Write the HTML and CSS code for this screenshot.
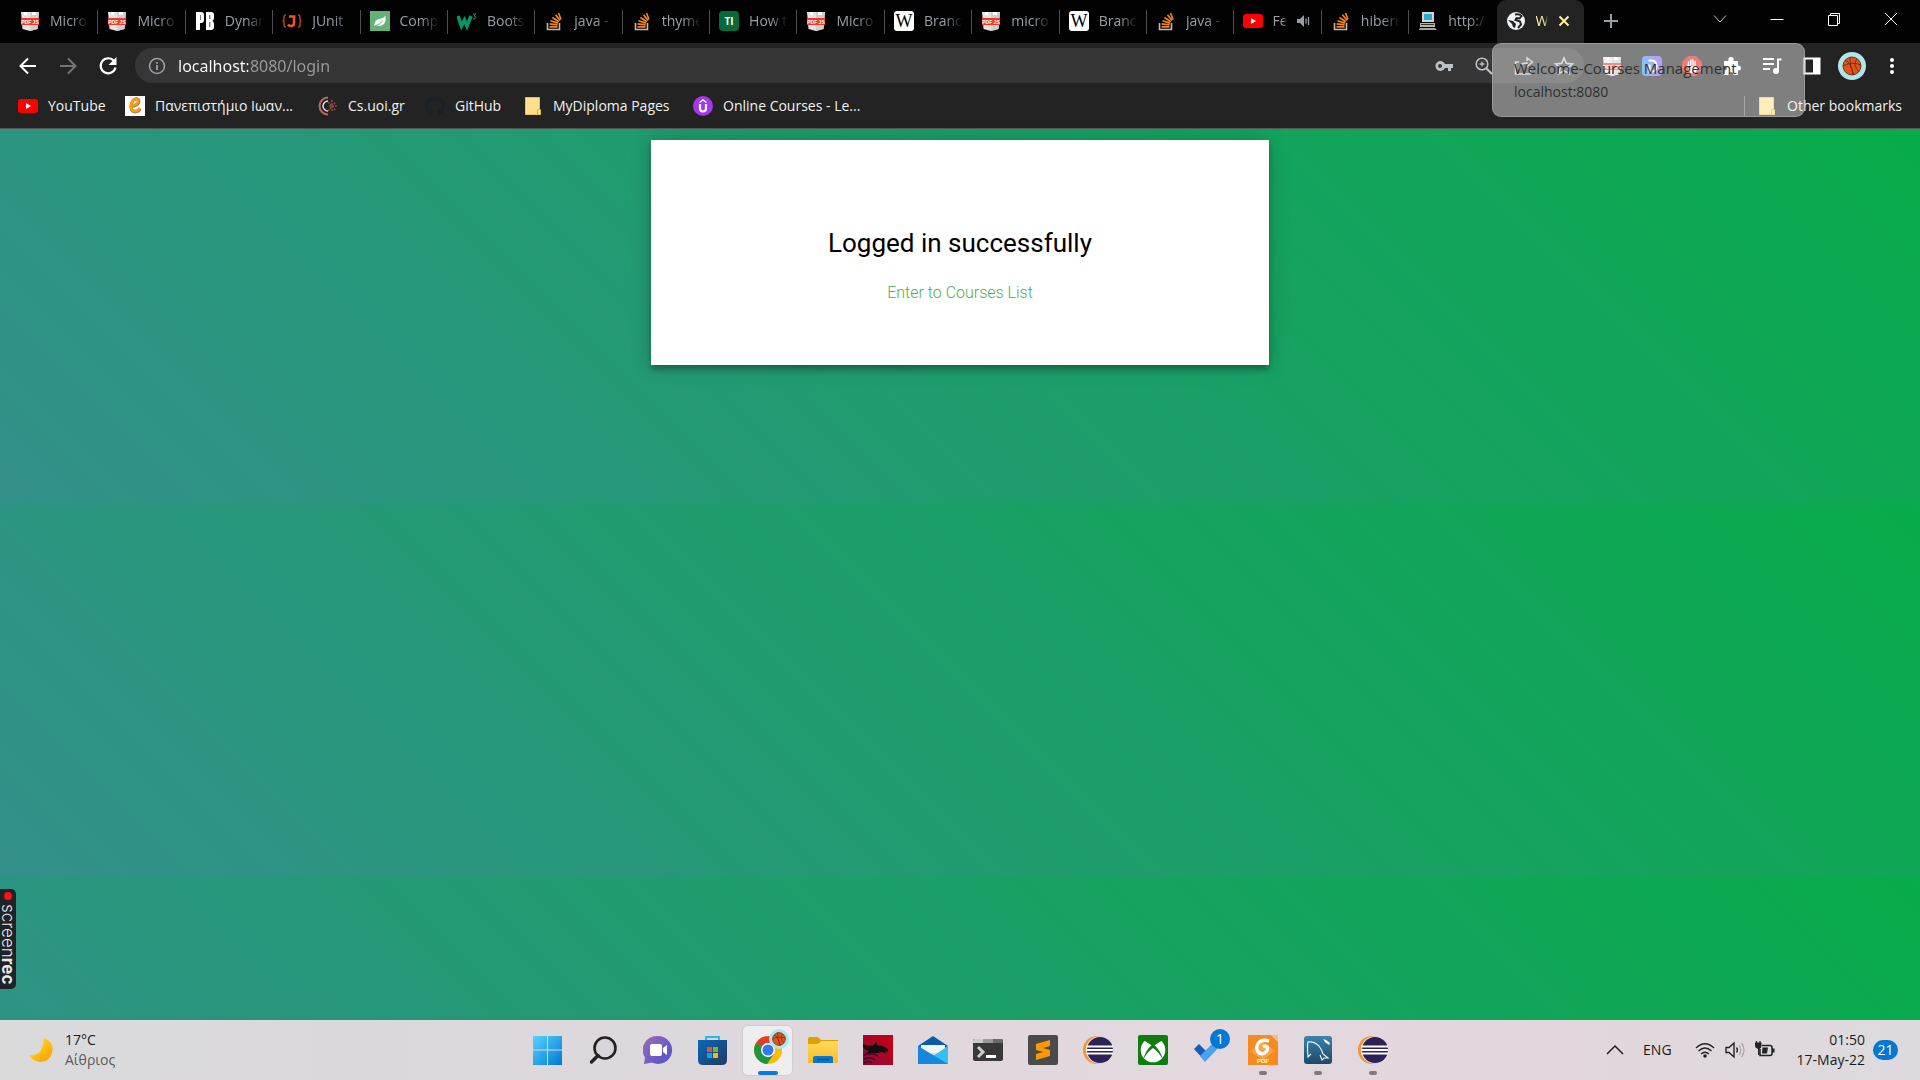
FILE: index.html
```html
<!DOCTYPE html>
<html lang="en">
<head>
<meta charset="utf-8">
<title>Welcome-Courses Management</title>
<link rel="stylesheet" href="styles.css">
</head>
<body>
<svg class="gradients" aria-hidden="true">
  <defs>
    <linearGradient id="g-win" x1="0" y1="0" x2="1" y2="1"><stop offset="0" stop-color="#5ad2ff"/><stop offset="1" stop-color="#0078d4"/></linearGradient>
    <linearGradient id="g-chat" x1="0" y1="0" x2="1" y2="1"><stop offset="0" stop-color="#9a6cb4"/><stop offset="1" stop-color="#4f52d0"/></linearGradient>
    <linearGradient id="g-store" x1="0" y1="0" x2="1" y2="1"><stop offset="0" stop-color="#0669bd"/><stop offset="1" stop-color="#243a5e"/></linearGradient>
    <linearGradient id="g-folder" x1="0" y1="0" x2="0" y2="1"><stop offset="0" stop-color="#ffd95c"/><stop offset="1" stop-color="#fcbd25"/></linearGradient>
    <linearGradient id="g-kali" x1="0" y1="1" x2="1" y2="0"><stop offset="0" stop-color="#8c0a3a"/><stop offset="1" stop-color="#c80012"/></linearGradient>
    <linearGradient id="g-moon" x1="0" y1="0" x2="1" y2="1"><stop offset="0" stop-color="#fff000"/><stop offset="1" stop-color="#ff9416"/></linearGradient>
    <linearGradient id="g-sql" x1="0" y1="0" x2="0" y2="1"><stop offset="0" stop-color="#3b84ab"/><stop offset="1" stop-color="#1d4866"/></linearGradient>
    <linearGradient id="g-d" x1="0" y1="0" x2="1" y2="0"><stop offset="0" stop-color="#2f9bf5"/><stop offset="1" stop-color="#8c50ec"/></linearGradient>
  </defs>
</svg>
<svg class="symbols" aria-hidden="true">
  <symbol id="i-pdf" viewBox="0 0 20 20"><path d="M1 1h18l-1.500 17L10 20l-7.500-2z" fill="#e4e4e4"/><path d="M10 1h9l-1.500 17L10 20z" fill="#cfcfcf"/><path d="M4 1v3h3V1zM12 1v3h4V1z" fill="#fff"/><path d="M1 7h18v7H1z" fill="#ee3a24"/><text x="10" y="12.500" text-anchor="middle" font-family="Liberation Sans, sans-serif" font-size="5" font-weight="700" fill="#fff">PDF JS</text></symbol>
  <symbol id="i-pb" viewBox="0 0 20 20"><path fill="#fff" fill-rule="evenodd" d="M1 1h5q3 0 3 3v5q0 3-3 3H5v7H1zM5 4v5h.5V4zM11 1h5q3 0 3 3v3q0 2-1.500 3Q19 11 19 13v3q0 3-3 3h-5zM14.500 4v4h.7V4zM14.500 11v5h.7v-5z"/></symbol>
  <symbol id="i-junit" viewBox="0 0 20 20"><g fill="none" stroke="#b8401c" stroke-width="1.500"><path d="M4 4Q2 4 2 6v2q0 2-1.500 2Q2 10 2 12v2q0 2 2 2M16 4q2 0 2 2v2q0 2 1.500 2Q18 10 18 12v2q0 2-2 2"/></g><path d="M7 5.500h6.500M12 5v7q0 3-3 3-2 0-3-1.500" fill="none" stroke="#e8542c" stroke-width="2.600"/></symbol>
  <symbol id="i-leaf" viewBox="0 0 20 20"><path d="M0 0h20v20H0z" fill="#62b176"/><path d="M15.500 4.500Q17 15 9 15q-2 0-3-1l-1.500 1.500Q4 9 9 8q5-1 6.500-3.500z" fill="#fff"/><path d="M5 15q5-1.500 8-5.500" stroke="#62b176" fill="none"/></symbol>
  <symbol id="i-w3" viewBox="0 0 20 20"><path d="M1 5l3.500 10 3-6 2.500 6 4-10" fill="none" stroke="#059862" stroke-width="3.600"/><path d="M16 3h3l-2 2q2 0 2 1.500T16 8" fill="none" stroke="#059862" stroke-width="1"/></symbol>
  <symbol id="i-so" viewBox="0 0 20 20"><path d="M3.500 12v6.500h12V12" fill="none" stroke="#bcbbbb" stroke-width="1.600"/><g stroke="#f48024" stroke-width="1.700"><path d="M5.500 15.800h8M5.600 12.900l8 1M6.500 9.700l7.500 2.400M8.400 6.500l6.400 4.300M11.500 3.700l4.500 5.900M14.500 2l2.500 6.500"/></g></symbol>
  <symbol id="i-ti" viewBox="0 0 20 20"><rect width="20" height="20" rx="4" fill="#066a39"/><text x="10" y="14" text-anchor="middle" font-size="10" font-weight="700" fill="#fff">TI</text></symbol>
  <symbol id="i-wiki" viewBox="0 0 20 20"><rect width="20" height="20" rx="3" fill="#fff"/><text x="10" y="16" text-anchor="middle" font-size="18" font-family="Liberation Serif, serif" fill="#000">W</text></symbol>
  <symbol id="i-yt" viewBox="0 0 20 20"><rect y="3" width="20" height="14" rx="3" fill="#f00"/><path d="M8 7l5 3-5 3z" fill="#fff"/></symbol>
  <symbol id="i-pc" viewBox="0 0 20 20"><path d="M4 1h12v10H4z" fill="#d6d4c8"/><path d="M6 3h8v6H6z" fill="#28a9d8"/><path d="M2 12h15v4H2z" fill="#b8b6aa"/><path d="M3 13.500h13" stroke="#333"/><path d="M2 17h15l2 2H1z" fill="#a5a39a"/></symbol>
  <symbol id="i-globe" viewBox="0 0 20 20"><circle cx="10" cy="10" r="9" fill="#f1f3f4"/><path d="M9 3.500q4-1 6.500 1.500l-2 2.500-3-.5-1 2 4.500 1.500 1 3-3 3.500" fill="none" stroke="#222" stroke-width="2"/><path d="M2 9l5 1 3 3-1 4-2-1-1-3z" fill="#222"/></symbol>
  <symbol id="i-ball" viewBox="0 0 28 28"><circle cx="14" cy="14" r="14" fill="#aee6ec"/><circle cx="14" cy="14" r="9" fill="#e2521b"/><g fill="none" stroke="#6b2c12" stroke-width=".9"><circle cx="14" cy="14" r="9"/><path d="M5 14q9-5 18-1M12 5q-1 9 4 18M7 8q7 3 8 15M19 7q-5 5 2 13"/></g></symbol>
  <symbol id="i-note" viewBox="0 0 20 20"><path d="M2.500 1.500h14V13l1 1v4.500h-15z" fill="#ffe08a" stroke="#e8bf50"/><path d="M14.500 18v-4l2-1" fill="none" stroke="#d8ab35"/></symbol>
  <symbol id="i-eclipse" viewBox="0 0 30 30"><circle cx="14" cy="15" r="14" fill="#f7942a"/><circle cx="16.500" cy="15" r="13.800" fill="#e1d9de"/><circle cx="17" cy="15" r="13" fill="#2c2255"/><path d="M3.500 10.500h27v2h-27zM3 14h27.500v2H3zM3.500 17.500h27v2h-27z" fill="#fff"/></symbol>
</svg>

<header class="browser">
  <nav class="tabstrip" aria-label="Tabs">
    <div class="tabs">
      <div class="tab"><svg class="fav"><use href="#i-pdf"/></svg><span class="title">Micro</span></div>
      <div class="tab"><svg class="fav"><use href="#i-pdf"/></svg><span class="title">Micro</span></div>
      <div class="tab"><svg class="fav"><use href="#i-pb"/></svg><span class="title">Dynar</span></div>
      <div class="tab"><svg class="fav"><use href="#i-junit"/></svg><span class="title">JUnit</span></div>
      <div class="tab"><svg class="fav"><use href="#i-leaf"/></svg><span class="title">Comp</span></div>
      <div class="tab"><svg class="fav"><use href="#i-w3"/></svg><span class="title">Boots</span></div>
      <div class="tab"><svg class="fav"><use href="#i-so"/></svg><span class="title">java -</span></div>
      <div class="tab"><svg class="fav"><use href="#i-so"/></svg><span class="title">thyme</span></div>
      <div class="tab"><svg class="fav"><use href="#i-ti"/></svg><span class="title">How t</span></div>
      <div class="tab"><svg class="fav"><use href="#i-pdf"/></svg><span class="title">Micro</span></div>
      <div class="tab"><svg class="fav"><use href="#i-wiki"/></svg><span class="title">Branc</span></div>
      <div class="tab"><svg class="fav"><use href="#i-pdf"/></svg><span class="title">micro</span></div>
      <div class="tab"><svg class="fav"><use href="#i-wiki"/></svg><span class="title">Branc</span></div>
      <div class="tab"><svg class="fav"><use href="#i-so"/></svg><span class="title">java -</span></div>
      <div class="tab playing"><svg class="fav"><use href="#i-yt"/></svg><span class="title">Fe</span><svg class="sound" viewBox="0 0 14 14"><path d="M1 5h3l4-4v12L4 9H1z" fill="#9aa0a6"/><path d="M10 4.500v5M12.500 3v8" stroke="#9aa0a6" stroke-width="1.300"/></svg></div>
      <div class="tab"><svg class="fav"><use href="#i-so"/></svg><span class="title">hibern</span></div>
      <div class="tab last"><svg class="fav"><use href="#i-pc"/></svg><span class="title">http:/</span></div>
      <div class="tab active"><svg class="fav"><use href="#i-globe"/></svg><span class="title">W</span><button class="plain" aria-label="Close tab"><svg class="s12" viewBox="0 0 12 12"><path d="M1.500 1.500l9 9M10.500 1.500l-9 9" stroke="#ffef9c" stroke-width="2"/></svg></button></div>
    </div>
    <div class="window-area">
      <button class="plain newtab" aria-label="New tab"><svg class="s16" viewBox="0 0 16 16"><path d="M8 1v14M1 8h14" stroke="#9aa0a6" stroke-width="2"/></svg></button>
      <div class="window-buttons">
        <button class="plain" aria-label="Search tabs"><svg class="s16" viewBox="0 0 16 16"><path d="M2 4.500l6 6.500 6-6.500" fill="none" stroke="#ccc"/></svg></button>
        <button class="plain" aria-label="Minimize"><svg class="s16" viewBox="0 0 16 16"><path d="M1.500 8.500h13" stroke="#fff"/></svg></button>
        <button class="plain" aria-label="Restore"><svg class="s16" viewBox="0 0 16 16"><path d="M2.500 4.500h9v10h-9zM4.500 4.500v-2h9v10h-2" fill="none" stroke="#fff"/></svg></button>
        <button class="plain" aria-label="Close"><svg class="s16" viewBox="0 0 16 16"><path d="M2 2l12 12M14 2L2 14" stroke="#fff"/></svg></button>
      </div>
    </div>
  </nav>

  <div class="toolbar">
    <div class="nav-buttons">
      <button class="plain" aria-label="Back"><svg class="s20" viewBox="0 0 20 20"><path d="M18 10H3M10 2.500L2.500 10l7.500 7.500" fill="none" stroke="#fff" stroke-width="2"/></svg></button>
      <button class="plain" aria-label="Forward"><svg class="s20" viewBox="0 0 20 20"><path d="M2 10h15M10 2.500l7.500 7.500-7.500 7.500" fill="none" stroke="#757575" stroke-width="2"/></svg></button>
      <button class="plain" aria-label="Reload"><svg class="s20" viewBox="0 0 20 20"><path d="M16 5a7.500 7.500 0 1 0 1.500 6.500" fill="none" stroke="#fff" stroke-width="2.200"/><path d="M18.500 1v8h-8z" fill="#fff"/></svg></button>
    </div>
    <div class="omnibox">
      <svg class="s20" viewBox="0 0 20 20"><circle cx="10" cy="10" r="7.500" fill="none" stroke="#9aa0a6" stroke-width="1.600"/><path d="M10 9v5M10 6v1.800" stroke="#9aa0a6" stroke-width="1.800"/></svg>
      <input class="url" type="text" aria-label="Address" value="localhost:8080/login">
      <div class="omni-actions">
        <button class="plain" aria-label="Saved passwords"><svg class="s20" viewBox="0 0 20 20"><path fill="#bdc1c6" fill-rule="evenodd" d="M11 8a5 5 0 1 0 0 4h3v3h3v-3h2V8zM6 8a2 2 0 1 1 0 4 2 2 0 0 1 0-4z"/></svg></button>
        <button class="plain" aria-label="Zoom"><svg class="s20" viewBox="0 0 20 20"><circle cx="8" cy="8" r="5.800" fill="none" stroke="#bdc1c6" stroke-width="1.600"/><path d="M12.500 12.500L18 18" stroke="#bdc1c6" stroke-width="2.200"/><path d="M8 5.500v5M5.500 8h5" stroke="#bdc1c6" stroke-width="1.300"/></svg></button>
        <button class="plain" aria-label="Share"><svg class="s20" viewBox="0 0 20 20"><path d="M5 6H1.500v12h15v-5M5 13q1-6 8-6v3.500L18.500 6 13 2v3" fill="none" stroke="#bdc1c6" stroke-width="1.500"/></svg></button>
        <button class="plain" aria-label="Bookmark this tab"><svg class="s20" viewBox="0 0 20 20"><path d="M10 2l2.400 5.400 5.900.6-4.400 3.900 1.300 5.800-5.200-3-5.200 3 1.300-5.800L1.700 8l5.900-.6z" fill="none" stroke="#bdc1c6" stroke-width="1.600"/></svg></button>
      </div>
    </div>
    <div class="extensions">
      <button class="plain" aria-label="PDF viewer"><svg class="s20"><use href="#i-pdf"/></svg></button>
      <button class="plain" aria-label="D extension"><svg class="s20" viewBox="0 0 20 20"><rect width="20" height="20" rx="4" fill="url(#g-d)"/><path d="M6.500 4.500h3q5 0 5 5.500t-5 5.500h-2v-7" fill="none" stroke="#fff" stroke-width="2"/></svg></button>
      <button class="plain" aria-label="Ad blocker"><svg class="s20" viewBox="0 0 20 20"><path d="M6 0h8l6 6v8l-6 6H6l-6-6V6z" fill="#e0201c"/><path d="M6.500 10V6M8.800 9V4M11 9V4M13.200 10V5.500M6 9l1 5 2 2.500h3.500l3.500-5" stroke="#fff" stroke-width="1.400" fill="#fff" stroke-linecap="round"/></svg></button>
      <button class="plain" aria-label="Extensions"><svg class="s20" viewBox="0 0 20 20"><path d="M2 5h4.500q-1-4 2.500-4t2.500 4H16v4.500q3 0 3 2.500t-3 2.500V19h-4.500q0-3-2.500-3t-2.500 3H2v-4.500q3 0 3-2.500t-3-2.500z" fill="#fff"/></svg></button>
      <button class="plain" aria-label="Media controls"><svg class="s20" viewBox="0 0 20 20"><path d="M1 3h11M1 8h11M1 13h7" stroke="#fff" stroke-width="2"/><path d="M19.500 3.500H16V15" fill="none" stroke="#fff" stroke-width="2"/><circle cx="14" cy="15" r="3" fill="#fff"/></svg></button>
      <button class="plain" aria-label="Side panel"><svg class="s20" viewBox="0 0 20 20"><path d="M2.500 2.500h15v15h-15z" fill="none" stroke="#fff" stroke-width="2"/><path d="M11 2h7v16h-7z" fill="#fff"/></svg></button>
      <button class="plain" aria-label="Profile"><svg class="s28"><use href="#i-ball"/></svg></button>
      <button class="plain" aria-label="Menu"><svg class="s20" viewBox="0 0 20 20"><circle cx="10" cy="4" r="2" fill="#fff"/><circle cx="10" cy="10" r="2" fill="#fff"/><circle cx="10" cy="16" r="2" fill="#fff"/></svg></button>
    </div>
  </div>

  <nav class="bookmarks" aria-label="Bookmarks">
    <div class="bookmark-list">
      <a href="#"><svg class="s20"><use href="#i-yt"/></svg>YouTube</a>
      <a href="#"><svg class="s20" viewBox="0 0 20 20"><path d="M0 0h20v20H0z" fill="#fff"/><path d="M5 11q9-1 9-5.500 0-3-3-2.500-5 2-5 8 0 5 4 5 3 0 5.500-3" fill="none" stroke="#888" stroke-width="2.800"/><path d="M4.500 10q8.500-1 8.500-5 0-3-2.500-2.500-4.500 2-4.500 7.500 0 5 4 5 3 0 5-3" fill="none" stroke="#f99b0c" stroke-width="2.800"/></svg>Πανεπιστήμιο Ιωαν...</a>
      <a href="#"><svg class="s20" viewBox="0 0 20 20"><g fill="none"><path d="M10 1.500a8.500 8.500 0 0 0 0 17" stroke="#b86a60" stroke-width="2"/><path d="M10 5a5 5 0 0 0 0 10" stroke="#ddd" stroke-width="1.500"/><path d="M10 6l8 9M10 15l8-9M11 10h8M14 4v12" stroke="#8d453f" stroke-width="1.700" stroke-dasharray="2 1"/></g></svg>Cs.uoi.gr</a>
      <a href="#"><svg class="s20" viewBox="0 0 16 16"><path fill="#1b1f27" d="M8 0C3.580 0 0 3.580 0 8c0 3.540 2.290 6.530 5.470 7.590.4.070.55-.17.55-.38 0-.19-.01-.82-.01-1.490-2.010.37-2.530-.49-2.690-.94-.09-.23-.48-.94-.82-1.130-.28-.15-.68-.52-.01-.53.63-.01 1.080.58 1.230.82.720 1.210 1.870.87 2.330.66.070-.52.280-.87.510-1.070-1.780-.2-3.640-.89-3.640-3.950 0-.87.310-1.590.82-2.150-.08-.2-.36-1.020.08-2.120 0 0 .67-.21 2.200.82.640-.18 1.320-.27 2-.27s1.360.09 2 .27c1.530-1.040 2.200-.82 2.200-.82.440 1.100.16 1.920.08 2.120.51.560.82 1.270.82 2.150 0 3.070-1.870 3.750-3.650 3.950.29.25.54.730.54 1.480 0 1.070-.01 1.930-.01 2.200 0 .21.150.46.55.38A8.010 8.010 0 0 0 16 8c0-4.420-3.580-8-8-8z"/></svg>GitHub</a>
      <a href="#"><svg class="s20"><use href="#i-note"/></svg>MyDiploma Pages</a>
      <a href="#"><svg class="s20" viewBox="0 0 20 20"><circle cx="10" cy="10" r="10" fill="#a435f0"/><path d="M7 8v4.500q0 3 3 3t3-3V8" fill="none" stroke="#fff" stroke-width="2.200"/><path d="M6.500 6.500L10 4l3.500 2.500" fill="none" stroke="#fff" stroke-width="1.500"/></svg>Online Courses - Le...</a>
    </div>
    <a class="other" href="#"><svg class="s20"><use href="#i-note"/></svg>Other bookmarks</a>
  </nav>

  <div class="tab-tip" role="tooltip">
    <span class="tip-title">Welcome-Courses Management</span>
    <span>localhost:8080</span>
  </div>
</header>

<main class="page">
  <section class="card">
    <h1>Logged in successfully</h1>
    <a href="#">Enter to Courses List</a>
  </section>
  <div class="recorder"><span class="dot"></span><span>screen<b>rec</b></span></div>
</main>

<footer class="taskbar">
  <div class="weather">
    <svg class="moon" viewBox="0 0 24 24"><path d="M15 0q10 4 8.500 13Q21 24 12 24 4 24 0 17q14 2 15-17z" fill="url(#g-moon)"/></svg>
    <div><div>17°C</div><div class="muted">Αίθριος</div></div>
  </div>
  <div class="apps">
    <button class="app" aria-label="Start"><svg viewBox="0 0 30 30"><path d="M0 1h14v13.500H0zM15 1h14v13.500H15zM0 15.500h14V30H0zM15 15.500h14V30H15z" fill="url(#g-win)"/></svg></button>
    <button class="app" aria-label="Search"><svg viewBox="0 0 30 30"><circle cx="17" cy="13" r="10.500" fill="#d9d4d9" stroke="#222" stroke-width="2.600"/><path d="M10 20.500L3.500 27" stroke="#222" stroke-width="3.400" stroke-linecap="round"/></svg></button>
    <button class="app" aria-label="Chat"><svg viewBox="0 0 30 30"><path d="M15 1a14 14 0 1 1-6 26.600L1 29l1-6.500A14 14 0 0 1 15 1z" fill="url(#g-chat)"/><rect x="7" y="9" width="12" height="12" rx="2" fill="#fff"/><path d="M20 13l4-3v10l-4-3z" fill="#fff"/></svg></button>
    <button class="app" aria-label="Microsoft Store"><svg viewBox="0 0 30 30"><path d="M8 6V2h13v4" fill="none" stroke="#29b6f0" stroke-width="2"/><path d="M0 5h29v20q0 5-5 5H5q-5 0-5-5z" fill="url(#g-store)"/><path d="M9 12h5v5H9z" fill="#f25022"/><path d="M15 12h5v5h-5z" fill="#7fba00"/><path d="M9 18h5v5H9z" fill="#00a4ef"/><path d="M15 18h5v5h-5z" fill="#ffb900"/></svg></button>
    <button class="app current" aria-label="Chrome"><svg viewBox="0 0 30 30"><circle cx="15" cy="15" r="14" fill="#fbbc09"/><path d="M15 15L2.900 8A14 14 0 0 1 27 8z" fill="#e33b2e"/><path d="M15 15L2.900 8A14 14 0 0 0 14 29l7-10z" fill="#1f9543"/><circle cx="15" cy="15" r="7" fill="#fff"/><circle cx="15" cy="15" r="5.500" fill="#3478ee"/></svg><svg class="profile"><use href="#i-ball"/></svg></button>
    <button class="app" aria-label="File Explorer"><svg viewBox="0 0 30 30"><path d="M0 4q0-2 2-2h8l3 3h17v5H0z" fill="#dfa000"/><path d="M0 9h10l3-3h17v22H0z" fill="url(#g-folder)"/><path d="M5 28v-5q0-2 2-2h16q2 0 2 2v5z" fill="#0a78d0"/><path d="M9 24.500h12" stroke="#064c90" stroke-width="1.500"/></svg></button>
    <button class="app" aria-label="Kali"><svg viewBox="0 0 30 30"><path d="M0 0h30v30H0z" fill="url(#g-kali)"/><path d="M0 9q5 3 10 1l4-3v3l6 1 5 3v3l-4-1 3 3-5-2-5 1-4 0q-5 0-10 3 2-3 6-5-4-1-6-4z" fill="#180c10"/><path d="M1 20q9-3 14 1M1 24q7-3 11 1M1 28q5-3 8 0" stroke="#40091f" fill="none" stroke-width="1.500"/></svg></button>
    <button class="app" aria-label="Mail"><svg viewBox="0 0 30 30"><path d="M0 11L15 1l15 10-8 6H8z" fill="#0a5ca8"/><path d="M3 10h24v8H3z" fill="#f4f4f4"/><path d="M0 11l15 10L30 11v18H0z" fill="#35c0f4"/><path d="M0 11l30 18H0z" fill="#1688dc"/></svg></button>
    <button class="app" aria-label="Terminal"><svg viewBox="0 0 30 30"><rect y="4" width="30" height="22" rx="2" fill="#383838"/><path d="M0 8V6q0-2 2-2h8v4z" fill="#ccc"/><path d="M10 4h10v4H10z" fill="#999"/><path d="M20 4h8q2 0 2 2v2H20z" fill="#6a6a6a"/><path d="M5 12l5 5-5 5" fill="none" stroke="#ccc" stroke-width="3"/><path d="M13 21.500h10" stroke="#fff" stroke-width="3"/></svg></button>
    <button class="app" aria-label="Sublime Text"><svg viewBox="0 0 30 30"><rect width="30" height="30" rx="2" fill="#4a4a4a"/><path d="M8 9l14-4v6l-7 2 7 2v6L8 25v-6l7-2-7-2z" fill="#ff9800"/></svg></button>
    <button class="app" aria-label="Eclipse"><svg><use href="#i-eclipse"/></svg></button>
    <button class="app" aria-label="Xbox"><svg viewBox="0 0 30 30"><rect width="30" height="30" rx="2" fill="#107c10"/><circle cx="15" cy="15" r="12.300" fill="#fff"/><path d="M5 6q3-1 10 4 7-5 10-4-3-4-10-4T5 6z" fill="#107c10"/><path d="M15 9Q8 14 5 25q4-8 10-12 6 4 10 12Q22 14 15 9z" fill="#107c10"/><path d="M7 5l8 5 8-5" stroke="#107c10" stroke-width="2" fill="none"/></svg></button>
    <button class="app" aria-label="To Do"><svg viewBox="0 0 30 30"><path d="M1 14l5-5 11 11-5 6z" fill="#185abd"/><path d="M7 21L24 4l5 5-17 18z" fill="#46a4f0"/></svg><span class="count">1</span></button>
    <button class="app open" aria-label="Foxit PDF"><svg viewBox="0 0 30 30"><path d="M0 0h23l7 7v23H0z" fill="#f68a1e"/><path d="M23 0h7v7z" fill="#f9b878"/><path d="M15 7l12 9-12 9L2 16z" fill="#fba24b"/><path d="M21 6q-7-2-10.500 2-3 4-1 8 2.500 4 7 2 3.500-2 3-6-2-2-4.500 0" fill="none" stroke="#fff" stroke-width="3.400"/><text x="15" y="28" text-anchor="middle" font-size="6" font-weight="700" fill="#fff">PDF</text></svg></button>
    <button class="app open" aria-label="MySQL Workbench"><svg viewBox="0 0 30 30"><rect x="1" y="1" width="28" height="28" rx="3" fill="url(#g-sql)"/><path d="M8 19l-3 3Q4 10 5 7q6-1 11 4 3 4 4 8l5 4-4 0-2 2-2-5" fill="none" stroke="#e6f1f7" stroke-width="1.200"/><path d="M20 4l3 1 4 3-1 2-4-3z" fill="#fff"/></svg></button>
    <button class="app open" aria-label="Eclipse workspace"><svg><use href="#i-eclipse"/></svg></button>
  </div>
  <div class="tray">
    <button class="plain" aria-label="Hidden icons"><svg class="s20" viewBox="0 0 20 20"><path d="M2 14l8-8 8 8" fill="none" stroke="#222" stroke-width="1.500"/></svg></button>
    <span class="lang">ENG</span>
    <span class="status">
      <svg class="s20" viewBox="0 0 20 20"><g fill="none" stroke="#222" stroke-width="1.400"><path d="M1 8q9-8.500 18 0M3.500 11q6.500-6 13 0M6 14q4-3.500 8 0"/></g><circle cx="10" cy="16" r="1.800" fill="#222"/></svg>
      <svg class="s20" viewBox="0 0 20 20"><path d="M1 7.500h3l5-4.500v14l-5-4.500H1z" fill="none" stroke="#222" stroke-width="1.400"/><path d="M11.500 7.500q2 2.500 0 5" fill="none" stroke="#222" stroke-width="1.300"/><path d="M14 5q3.500 5 0 10M16.500 3q5 7 0 14" fill="none" stroke="#aaa" stroke-width="1.300"/></svg>
      <svg class="s20" viewBox="0 0 20 20"><path d="M7 5.500h8q2 0 2 2v6q0 2-2 2H5V9" fill="none" stroke="#222" stroke-width="1.500"/><path d="M7.500 7.500H13l-1 6H7zM17 8.500h2.500v4H17zM0 2.500h6.500V6q0 2-2 3v6H3V9Q0 8 0 6z" fill="#222"/><path d="M1.500 1v3M5 1v3" stroke="#222" stroke-width="1.200"/></svg>
    </span>
    <div class="clock"><div>01:50</div><div>17-May-22</div></div>
    <span class="notify">21</span>
  </div>
</footer>
</body>
</html>
```
FILE: styles.css
```css
* {
  box-sizing: border-box;
}

body {
  margin: 0;
  min-height: 100vh;
  display: flex;
  flex-direction: column;
  font-family: "Open Sans", "Noto Sans", sans-serif;
  font-size: 14px;
  line-height: 20px;
}

a {
  color: inherit;
  text-decoration: none;
}

svg {
  display: block;
  flex: none;
}

.gradients {
  position: absolute;
  width: 0;
  height: 0;
}

.symbols {
  display: none;
}

.plain {
  display: flex;
  align-items: center;
  justify-content: center;
  padding: 0;
  border: 0;
  background: none;
}

.s12 { width: 12px; height: 12px; }
.s16 { width: 16px; height: 16px; }
.s20 { width: 20px; height: 20px; }
.s28 { width: 28px; height: 28px; }

/* Browser chrome */
.browser {
  position: relative;
  background: #232323;
  color: #f1f1f1;
}

.tabstrip {
  display: flex;
  height: 43px;
  padding-left: 11px;
  background: #020202;
}

.tabs {
  flex: 1;
  display: grid;
  grid-template-columns: repeat(18, minmax(0, 1fr));
}

.tab {
  display: flex;
  align-items: center;
  gap: 10px;
  padding: 0 9px 2px;
  color: #9aa0a6;
  background: linear-gradient(#4d4d4d, #4d4d4d) right 10px / 1px 24px no-repeat;
}

.tab.last {
  background: none;
}

.tab.active {
  gap: 10px;
  color: #fff3a8;
  background: #232323;
  border-radius: 9px 9px 0 0;
}

.fav {
  width: 20px;
  height: 20px;
}

.title {
  flex: 1;
  overflow: hidden;
  white-space: nowrap;
  mask-image: linear-gradient(to left, transparent, #000 18px);
}

.tab.active .title,
.tab.playing .title {
  mask-image: linear-gradient(to left, transparent, #000 4px);
}

.tab.playing {
  gap: 9px;
  padding-right: 12px;
}

.tab.active .plain {
  margin-right: 5px;
}

.sound {
  width: 14px;
  height: 14px;
}

.window-area {
  width: 336px;
  display: flex;
  justify-content: space-between;
}

.newtab {
  width: 54px;
  padding-bottom: 2px;
}

.window-buttons {
  display: grid;
  grid-template-columns: repeat(4, 57px);
  height: 37px;
  padding-right: 1px;
}

.toolbar {
  display: flex;
  align-items: center;
  height: 45px;
  padding: 0 8px;
}

.nav-buttons .plain,
.omni-actions .plain,
.extensions .plain {
  width: 40px;
  height: 35px;
}

.nav-buttons,
.omni-actions,
.extensions {
  display: flex;
}

.omnibox {
  flex: 1;
  display: flex;
  align-items: center;
  gap: 11px;
  height: 35px;
  margin-left: 7px;
  padding-left: 12px;
  border-radius: 18px;
  background: #363636;
}

.url {
  flex: 1;
  min-width: 0;
  padding: 0;
  border: 0;
  font: 16px/24px "Noto Sans", "Open Sans", sans-serif;
  color: transparent;
  background: linear-gradient(to right, #fff 70px, #9c9c9c 70px);
  background-clip: text;
}

.extensions {
  margin-left: 8px;
}

.bookmarks {
  display: flex;
  align-items: center;
  justify-content: space-between;
  height: 41px;
  padding: 0 18px 4px;
  border-bottom: 1px solid #555;
}

.bookmark-list {
  display: grid;
  grid-template-columns: 107px 193px 107px 98px 170px auto;
}

.bookmarks a {
  display: flex;
  align-items: center;
  gap: 10px;
  white-space: nowrap;
}

.bookmarks .other {
  padding-left: 12px;
  border-left: 1px solid #666;
}

.tab-tip {
  position: absolute;
  top: 43px;
  right: 115px;
  width: 313px;
  height: 74px;
  display: flex;
  flex-direction: column;
  gap: 4px;
  padding: 14px 21px;
  border: 1px solid rgba(180, 180, 180, 0.5);
  border-radius: 9px;
  background: rgba(255, 255, 255, 0.42);
  color: #303030;
  white-space: nowrap;
}

.tip-title {
  font-size: 15px;
  font-weight: 500;
}

/* Web page */
.page {
  position: relative;
  flex: 1;
  padding-top: 11px;
  background: linear-gradient(45deg, #328f8a, #08ac4b) 0 0 / 100% 374px;
  font-family: Roboto, sans-serif;
}

.card {
  display: flex;
  flex-direction: column;
  align-items: center;
  gap: 20px;
  width: 618px;
  max-width: 100%;
  margin: 0 auto;
  padding: 85px 56px 60px;
  background: #fff;
  box-shadow: 0 0 20px 0 rgba(0, 0, 0, 0.2), 0 5px 5px 0 rgba(0, 0, 0, 0.24);
}

.card h1 {
  margin: 0;
  font-size: 26px;
  font-weight: 400;
  line-height: 36px;
  color: #000;
}

.card a {
  font-size: 16px;
  font-weight: 300;
  line-height: 24px;
  color: #4caf50;
}

.recorder {
  position: absolute;
  left: 0;
  bottom: 31px;
  width: 16px;
  height: 100px;
  display: flex;
  align-items: center;
  gap: 4px;
  padding-top: 3px;
  border-radius: 0 5px 5px 0;
  background: #1f2229;
  color: #e8e8e8;
  font: 300 17px/16px "Inter", sans-serif;
  writing-mode: vertical-rl;
}

.recorder b {
  font-weight: 700;
}

.dot {
  width: 8px;
  height: 8px;
  border-radius: 50%;
  background: #f11;
}

/* Taskbar */
.taskbar {
  display: grid;
  grid-template-columns: 1fr auto 1fr;
  align-items: center;
  height: 60px;
  background: linear-gradient(to right, #dadadb, #dcd8dc 25%, #e2d8de 60%, #e1d7dc 82%, #dddadd);
  color: #1c1c1c;
}

.weather {
  display: flex;
  align-items: center;
  gap: 12px;
  padding-left: 29px;
}

.moon {
  width: 24px;
  height: 24px;
}

.muted {
  color: #5a5a5a;
}

.apps {
  display: flex;
  gap: 6px;
}

.app {
  position: relative;
  display: flex;
  align-items: center;
  justify-content: center;
  width: 49px;
  height: 49px;
  padding: 0;
  border: 0;
  border-radius: 5px;
  background: none;
}

.app svg {
  width: 30px;
  height: 30px;
}

.app.current {
  background: #f0edf0;
  box-shadow: 0 0 1px 1px rgba(0, 0, 0, 0.06);
}

.app.current::after,
.app.open::after {
  content: "";
  position: absolute;
  bottom: 0;
  width: 8px;
  height: 4px;
  border-radius: 2px;
  background: #807a7e;
}

.app.current::after {
  width: 20px;
  background: #0a78d4;
}

.app .profile {
  position: absolute;
  top: 3px;
  right: 3px;
  width: 20px;
  height: 20px;
}

.count {
  position: absolute;
  top: 3px;
  right: 2px;
  width: 20px;
  height: 20px;
  border-radius: 50%;
  background: #0078d4;
  color: #fff;
  font: 14px/20px "Open Sans", sans-serif;
}

.tray {
  display: flex;
  align-items: center;
  justify-content: flex-end;
  padding-right: 22px;
}

.lang {
  margin: 0 23px 0 18px;
}

.status {
  display: flex;
  gap: 10px;
}

.clock {
  margin: 0 8px 0 22px;
  text-align: right;
}

.notify {
  width: 25px;
  height: 20px;
  border-radius: 10px;
  background: #0078d4;
  color: #fff;
  text-align: center;
}
```
